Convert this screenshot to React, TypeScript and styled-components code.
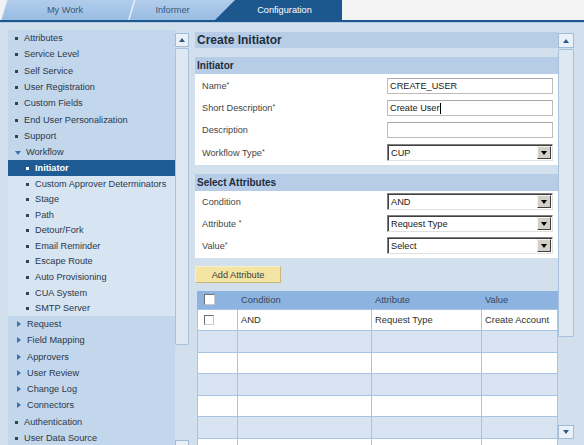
import React from 'react';
import styled, { createGlobalStyle } from 'styled-components';

const Global = createGlobalStyle`
  html, body { margin: 0; padding: 0; }
  body {
    font-family: "Liberation Sans", Arial, sans-serif;
    width: 584px; height: 445px; overflow: hidden;
    background: #d2e0ee;
  }
  * { box-sizing: border-box; }
`;

const Page = styled.div`
  width: 584px; height: 445px;
  display: flex; flex-direction: column; overflow: hidden;
`;

const TabBar = styled.div`
  height: 20px; flex-shrink: 0;
  display: flex;
  background: #f3f3f3;
`;

const Tab = styled.div<{ $active?: boolean; $w: number; $slant: number; $overlap: number; $pl?: number; $pr?: number }>`
  position: relative;
  width: ${p => p.$w}px;
  margin-left: -${p => p.$overlap}px;
  height: 100%;
  clip-path: polygon(${p => p.$slant}px 0, 100% 0, 100% 100%, 0 100%);
  background: ${p => (p.$active ? '#1c578e' : '#e6eef7')};
  display: flex; align-items: center; justify-content: center;
  padding-left: ${p => p.$pl ?? 0}px;
  padding-right: ${p => p.$pr ?? 0}px;
  font-size: 9.2px;
  color: ${p => (p.$active ? '#ffffff' : '#3b5878')};
  &::before {
    content: '';
    position: absolute; inset: 0;
    background: ${p => (p.$active ? '#1c578e' : 'linear-gradient(#b2cdec, #99bce3)')};
    clip-path: polygon(${p => p.$slant + 1.5}px 0, 100% 0, 100% 100%, 1.5px 100%);
  }
`;

const TabLabel = styled.span`
  position: relative;
`;

const Rule = styled.div`
  height: 2px; flex-shrink: 0;
  background: #1c578e;
`;

const Body = styled.div`
  flex: 1;
  display: flex;
  align-items: flex-start;
  overflow: hidden;
  border-top: 1px solid #b3cbe4;
`;

/* ---------- left navigation ---------- */

const LeftPanel = styled.div`
  margin-left: 8px;
  margin-top: 7px;
  display: flex;
  align-items: flex-start;
`;

const Nav = styled.div`
  width: 167px;
  background: #c2d6ec;
  display: flex; flex-direction: column;
`;

const SubList = styled.div`
  background: #d7e4f2;
  display: flex; flex-direction: column;
`;

const NavItem = styled.div<{ $sub?: boolean; $selected?: boolean; $pl: number; $gap: number }>`
  height: ${p => (p.$sub ? 15.55 : 16.3)}px;
  display: flex; align-items: center;
  padding-left: ${p => p.$pl}px;
  gap: ${p => p.$gap}px;
  font-size: 9.2px;
  white-space: nowrap;
  color: ${p => (p.$selected ? '#ffffff' : '#2b394a')};
  font-weight: ${p => (p.$selected ? 'bold' : 'normal')};
  background: ${p => (p.$selected ? '#1f5b94' : 'transparent')};
`;

const Bullet = styled.span<{ $light?: boolean }>`
  width: 3px; height: 3px; flex-shrink: 0;
  background: ${p => (p.$light ? '#ffffff' : '#34414f')};
  margin-top: 1px;
`;

const TriDown = styled.span`
  width: 0; height: 0; flex-shrink: 0;
  border-left: 3.5px solid transparent;
  border-right: 3.5px solid transparent;
  border-top: 4px solid #3f73a8;
  margin-top: 1px;
`;

const TriRight = styled.span`
  width: 0; height: 0; flex-shrink: 0;
  border-top: 3.5px solid transparent;
  border-bottom: 3.5px solid transparent;
  border-left: 4px solid #3f73a8;
`;

/* ---------- scrollbars ---------- */

const ScrollCol = styled.div<{ $w: number; $mt: number }>`
  width: ${p => p.$w}px;
  margin-top: ${p => p.$mt}px;
  display: flex; flex-direction: column;
  align-items: stretch;
`;

const ScrollBtn = styled.div<{ $h: number; $mt?: number }>`
  height: ${p => p.$h}px;
  margin-top: ${p => p.$mt ?? 0}px;
  background: #e9f0f7;
  border: 1px solid #a3bcd6;
  display: flex; align-items: center; justify-content: center;
`;

const ArrowUp = styled.span`
  width: 0; height: 0;
  border-left: 3.5px solid transparent;
  border-right: 3.5px solid transparent;
  border-bottom: 4px solid #2c5c8c;
`;

const ArrowDown = styled.span`
  width: 0; height: 0;
  border-left: 3.5px solid transparent;
  border-right: 3.5px solid transparent;
  border-top: 4px solid #2c5c8c;
`;

const Thumb = styled.div<{ $h: number; $mt: number }>`
  height: ${p => p.$h}px;
  margin-top: ${p => p.$mt}px;
  background: #dde8f3;
  border: 1px solid #a9c1da;
  border-radius: 1px;
`;

/* ---------- main content ---------- */

const Main = styled.div`
  width: 363px;
  margin-left: 6px;
  margin-top: 9px;
  display: flex; flex-direction: column;
`;

const TitleBar = styled.div`
  height: 16px;
  background: #b6cce7;
  padding-left: 2px;
  font-size: 12px; font-weight: bold;
  line-height: 16px;
  color: #1e2c3c;
`;

const Section = styled.div`
  margin-top: 9px;
  display: flex; flex-direction: column;
`;

const SectionHeader = styled.div`
  height: 17px;
  background: #b6cce7;
  padding-left: 2px;
  font-size: 10px; font-weight: bold;
  line-height: 17px;
  color: #1e2c3c;
`;

const SectionBody = styled.div<{ $pt: number; $pb: number; $gap: number }>`
  background: #ffffff;
  padding: ${p => p.$pt}px 0 ${p => p.$pb}px 0;
  display: flex; flex-direction: column;
  gap: ${p => p.$gap}px;
`;

const FormRow = styled.div<{ $h: number }>`
  height: ${p => p.$h}px;
  display: grid;
  grid-template-columns: 185px 166px;
  padding-left: 7px;
  align-items: center;
`;

const Label = styled.div`
  font-size: 9.2px;
  color: #454545;
`;

const Req = styled.span`
  font-size: 7px;
  vertical-align: 2px;
`;

const TextInput = styled.div`
  height: 16px;
  background: #ffffff;
  border: 1px solid #bdbdbd;
  border-top-color: #a8a8a8;
  display: flex; align-items: center;
  padding-left: 2px;
  font-size: 9.2px;
  color: #202020;
`;

const Caret = styled.span`
  display: inline-block;
  width: 1px; height: 11px;
  background: #000;
`;

const SelectBox = styled.div`
  height: 17px;
  background: #ffffff;
  border-top: 1px solid #808080;
  border-left: 1px solid #808080;
  border-right: 1px solid #e0e0e0;
  border-bottom: 1px solid #e0e0e0;
  box-shadow: inset 1px 1px 0 #404040;
  display: flex; align-items: center;
  padding: 1px 1px 1px 3px;
  font-size: 9.2px;
  color: #202020;
`;

const SelectText = styled.span`
  flex: 1;
`;

const DropBtn = styled.span`
  width: 14px; height: 13px;
  background: #d4d0c8;
  border-top: 1px solid #f4f4f4;
  border-left: 1px solid #f4f4f4;
  border-right: 1px solid #404040;
  border-bottom: 1px solid #404040;
  display: flex; align-items: center; justify-content: center;
  &::after {
    content: '';
    width: 0; height: 0;
    border-left: 3.5px solid transparent;
    border-right: 3.5px solid transparent;
    border-top: 4px solid #000;
  }
`;

const AddButton = styled.button`
  margin-top: 8px;
  width: 86px; height: 17px;
  padding: 0;
  background: #f3e4a4;
  border: 1px solid #c9b77a;
  border-top-color: #f8f0cc;
  border-left-color: #f8f0cc;
  font-family: "Liberation Sans", Arial, sans-serif;
  font-size: 9.2px;
  color: #3c3c3c;
  text-align: center;
`;

const Table = styled.table`
  margin-top: 8px;
  margin-left: 2px;
  width: 360px;
  border-collapse: collapse;
  table-layout: fixed;
  font-size: 9.4px;
`;

const Th = styled.th`
  height: 18px;
  background: #8db3e1;
  color: #35475f;
  font-weight: normal;
  text-align: left;
  padding: 0 0 0 3px;
  border-left: 1px solid #8db3e1;
`;

const Tr = styled.tr<{ $alt?: boolean }>`
  height: 21.5px;
  background: ${p => (p.$alt ? '#d8e4f1' : '#ffffff')};
`;

const Td = styled.td`
  border: 1px solid #a8c4e5;
  padding: 0 0 0 3px;
  color: #303030;
  white-space: nowrap;
  overflow: hidden;
`;

const CheckCell = styled.div`
  padding-left: 3px;
  display: flex; align-items: center;
`;

const Check = styled.span<{ $size: number }>`
  width: ${p => p.$size}px; height: ${p => p.$size}px;
  background: #ffffff;
  border-top: 1px solid #6f6f6f;
  border-left: 1px solid #6f6f6f;
  border-right: 1px solid #c8c8c8;
  border-bottom: 1px solid #c8c8c8;
`;

type NavDef = { label: string; kind: 'bullet' | 'down' | 'right' };

const topItems: NavDef[] = [
  { label: 'Attributes', kind: 'bullet' },
  { label: 'Service Level', kind: 'bullet' },
  { label: 'Self Service', kind: 'bullet' },
  { label: 'User Registration', kind: 'bullet' },
  { label: 'Custom Fields', kind: 'bullet' },
  { label: 'End User Personalization', kind: 'bullet' },
  { label: 'Support', kind: 'bullet' },
  { label: 'Workflow', kind: 'down' },
];

const subItems = [
  'Initiator',
  'Custom Approver Determinators',
  'Stage',
  'Path',
  'Detour/Fork',
  'Email Reminder',
  'Escape Route',
  'Auto Provisioning',
  'CUA System',
  'SMTP Server',
];

const bottomItems: NavDef[] = [
  { label: 'Request', kind: 'right' },
  { label: 'Field Mapping', kind: 'right' },
  { label: 'Approvers', kind: 'right' },
  { label: 'User Review', kind: 'right' },
  { label: 'Change Log', kind: 'right' },
  { label: 'Connectors', kind: 'right' },
  { label: 'Authentication', kind: 'bullet' },
  { label: 'User Data Source', kind: 'bullet' },
];

function TopNav({ item }: { item: NavDef }) {
  if (item.kind === 'down')
    return (
      <NavItem $pl={7} $gap={5}>
        <TriDown />
        {item.label}
      </NavItem>
    );
  if (item.kind === 'right')
    return (
      <NavItem $pl={9} $gap={6}>
        <TriRight />
        {item.label}
      </NavItem>
    );
  return (
    <NavItem $pl={7} $gap={6}>
      <Bullet />
      {item.label}
    </NavItem>
  );
}

function Select({ value }: { value: string }) {
  return (
    <SelectBox>
      <SelectText>{value}</SelectText>
      <DropBtn />
    </SelectBox>
  );
}

export default function App() {
  const emptyRows = [true, false, true, false, true, false];
  return (
    <Page>
      <Global />
      <TabBar>
        <Tab $w={134} $slant={6} $overlap={0} $pr={4}>
          <TabLabel>My Work</TabLabel>
        </Tab>
        <Tab $w={107} $slant={6} $overlap={6} $pr={18}>
          <TabLabel>Informer</TabLabel>
        </Tab>
        <Tab $active $w={127} $slant={20} $overlap={20} $pl={12}>
          <TabLabel>Configuration</TabLabel>
        </Tab>
      </TabBar>
      <Rule />
      <Body>
        <LeftPanel>
          <Nav>
            {topItems.map(i => (
              <TopNav key={i.label} item={i} />
            ))}
            <SubList>
              {subItems.map((s, idx) => (
                <NavItem key={s} $sub $pl={18} $gap={6} $selected={idx === 0}>
                  <Bullet $light={idx === 0} />
                  {s}
                </NavItem>
              ))}
            </SubList>
            {bottomItems.map(i => (
              <TopNav key={i.label} item={i} />
            ))}
          </Nav>
          <ScrollCol $w={14} $mt={3}>
            <ScrollBtn $h={14}>
              <ArrowUp />
            </ScrollBtn>
            <Thumb $h={297} $mt={1} />
            <ScrollBtn $h={14} $mt={95}>
              <ArrowDown />
            </ScrollBtn>
          </ScrollCol>
        </LeftPanel>

        <Main>
          <TitleBar>Create Initiator</TitleBar>

          <Section>
            <SectionHeader>Initiator</SectionHeader>
            <SectionBody $pt={4} $pb={4} $gap={6}>
              <FormRow $h={16}>
                <Label>Name<Req>*</Req></Label>
                <TextInput>CREATE_USER</TextInput>
              </FormRow>
              <FormRow $h={16}>
                <Label>Short Description<Req>*</Req></Label>
                <TextInput>
                  Create User<Caret />
                </TextInput>
              </FormRow>
              <FormRow $h={16}>
                <Label>Description</Label>
                <TextInput />
              </FormRow>
              <FormRow $h={17}>
                <Label>Workflow Type<Req>*</Req></Label>
                <Select value="CUP" />
              </FormRow>
            </SectionBody>
          </Section>

          <Section>
            <SectionHeader>Select Attributes</SectionHeader>
            <SectionBody $pt={2} $pb={4} $gap={5}>
              <FormRow $h={17}>
                <Label>Condition</Label>
                <Select value="AND" />
              </FormRow>
              <FormRow $h={17}>
                <Label>Attribute <Req>*</Req></Label>
                <Select value="Request Type" />
              </FormRow>
              <FormRow $h={17}>
                <Label>Value<Req>*</Req></Label>
                <Select value="Select" />
              </FormRow>
            </SectionBody>
          </Section>

          <AddButton>Add Attribute</AddButton>

          <Table>
            <colgroup>
              <col style={{ width: 40 }} />
              <col style={{ width: 134 }} />
              <col style={{ width: 110 }} />
              <col style={{ width: 76 }} />
            </colgroup>
            <thead>
              <tr>
                <Th>
                  <CheckCell>
                    <Check $size={11} />
                  </CheckCell>
                </Th>
                <Th>Condition</Th>
                <Th>Attribute</Th>
                <Th>Value</Th>
              </tr>
            </thead>
            <tbody>
              <Tr>
                <Td>
                  <CheckCell>
                    <Check $size={10} />
                  </CheckCell>
                </Td>
                <Td>AND</Td>
                <Td>Request Type</Td>
                <Td>Create Account</Td>
              </Tr>
              {emptyRows.map((alt, i) => (
                <Tr key={i} $alt={alt}>
                  <Td />
                  <Td />
                  <Td />
                  <Td />
                </Tr>
              ))}
            </tbody>
          </Table>
        </Main>

        <ScrollCol $w={16} $mt={10}>
          <ScrollBtn $h={15}>
            <ArrowUp />
          </ScrollBtn>
          <Thumb $h={288} $mt={1} />
          <ScrollBtn $h={14} $mt={88}>
            <ArrowDown />
          </ScrollBtn>
        </ScrollCol>
      </Body>
    </Page>
  );
}
